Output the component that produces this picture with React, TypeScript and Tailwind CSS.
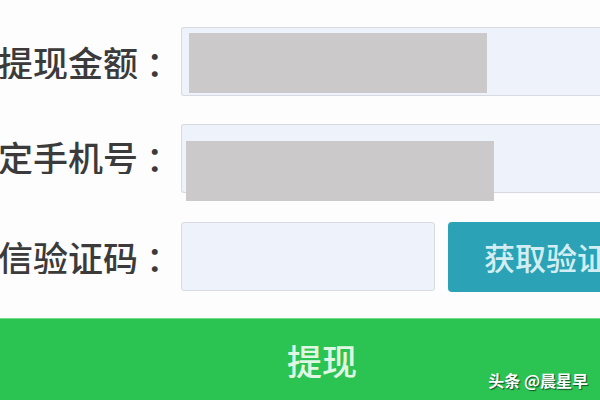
import React from "react";

const font = { fontFamily: '"Noto Sans CJK SC", "Noto Sans", sans-serif' };

const Label: React.FC<{ text: string; lift?: boolean }> = ({ text, lift }) => (
  <div className={"w-[181px] shrink-0 overflow-hidden flex justify-end " + (lift ? "mb-[5px]" : "")}>
    <span className="whitespace-nowrap text-[35px] leading-none font-medium text-[#3b3b3b]">
      {text}
      <span className="ml-[8px]">：</span>
    </span>
  </div>
);

const App: React.FC = () => {
  return (
    <div
      className="w-[600px] h-[400px] overflow-hidden bg-[#fdfdfd] flex flex-col pt-[27px]"
      style={font}
    >
      {/* 提现金额 */}
      <div className="flex items-center h-[69px]">
        <Label text="提现金额" />
        <div className="relative flex-1 h-full bg-[#eef2fb] border border-[#d9dadf] rounded-l-[3px] border-r-0">
          <div className="absolute left-[7px] top-[5px] w-[298px] h-[60px] bg-[#cbc9ca]" />
        </div>
      </div>

      {/* 绑定手机号 */}
      <div className="flex items-center h-[69px] mt-[28px]">
        <Label text="绑定手机号" lift />
        <div className="relative flex-1 h-full bg-[#eef2fb] border border-[#d9dadf] rounded-l-[3px] border-r-0">
          <div className="absolute left-[4px] top-[16px] w-[308px] h-[60px] bg-[#cbc9ca]" />
        </div>
      </div>

      {/* 短信验证码 */}
      <div className="flex items-center h-[69px] mt-[29px]">
        <Label text="短信验证码" />
        <div className="w-[254px] h-full shrink-0 bg-[#eef2fb] border border-[#d9dadf] rounded-[3px]" />
        <button
          type="button"
          className="ml-[13px] h-[70px] w-[240px] shrink-0 rounded-[4px] bg-[#2ba2b6] text-left pl-[36px] text-[31px] leading-none font-medium text-[#d3eef2] whitespace-nowrap"
        >
          获取验证码
        </button>
      </div>

      {/* 提现 */}
      <div className="relative mt-[27px] h-[82px] bg-[#2bc352] border-t border-[#6fdc8a] flex items-center justify-center">
        <span className="text-[35px] leading-none font-medium text-[#e0f7e4] ml-[44px]">提现</span>
        <span className="absolute right-[12px] bottom-[12px] text-[16px] leading-none font-bold text-white whitespace-nowrap [text-shadow:1px_1px_1px_rgba(0,0,0,0.6)]">
          头条 @晨星早
        </span>
      </div>
    </div>
  );
};

export default App;
